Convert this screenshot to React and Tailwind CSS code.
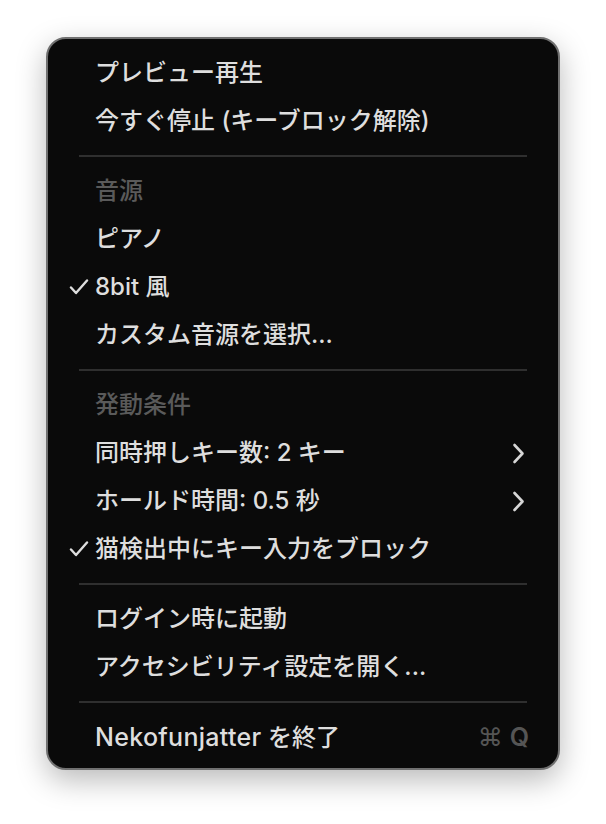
const font = {
  fontFamily: 'Inter, "Noto Sans CJK JP", sans-serif',
};

function Check() {
  return (
    <svg
      className="absolute left-[21px] top-1/2 -translate-y-1/2"
      width="20"
      height="16"
      viewBox="0 0 20 16"
      fill="none"
    >
      <path
        d="M2 8.5 L7 14 L18 1.5"
        stroke="#dedede"
        strokeWidth="2.4"
        strokeLinecap="round"
        strokeLinejoin="round"
      />
    </svg>
  );
}

function Chevron() {
  return (
    <svg width="13" height="21" viewBox="0 0 13 21" fill="none">
      <path
        d="M2.5 2 L10.5 10.5 L2.5 19"
        stroke="#d6d6d6"
        strokeWidth="2.6"
        strokeLinecap="round"
        strokeLinejoin="round"
      />
    </svg>
  );
}

function Item({ children, checked, submenu, shortcut }) {
  return (
    <div className="relative flex items-center justify-between h-[48px] pl-[47px] pr-[33px] text-[#dedede]">
      {checked && <Check />}
      <span className="text-[24px] leading-none font-medium">{children}</span>
      {submenu && <Chevron />}
      {shortcut && (
        <span className="flex items-center gap-[7px] text-[#555555] -mr-[4px]">
          <span className="text-[25px] leading-none">⌘</span>
          <span className="text-[25px] leading-none font-semibold">Q</span>
        </span>
      )}
    </div>
  );
}

function Header({ children }) {
  return (
    <div className="flex items-center h-[48px] pl-[47px] text-[24px] leading-none font-medium text-[#5a5a5a]">
      {children}
    </div>
  );
}

function Separator() {
  return (
    <div className="h-[22px] flex items-center px-[31px]">
      <div className="h-[2px] w-full bg-[#2f2f2f]" />
    </div>
  );
}

export default function App() {
  return (
    <div className="min-h-screen bg-white pt-[37px] pl-[46px]" style={font}>
      <div className="w-[514px] rounded-[20px] bg-[#0a0a0a] border-2 border-[#707070] shadow-[0_10px_30px_rgba(0,0,0,0.28)] pt-[10px] pb-[7px]">
        <Item>プレビュー再生</Item>
        <Item>今すぐ停止 (キーブロック解除)</Item>
        <Separator />
        <Header>音源</Header>
        <Item>ピアノ</Item>
        <Item checked>8bit 風</Item>
        <Item>カスタム音源を選択...</Item>
        <Separator />
        <Header>発動条件</Header>
        <Item submenu>同時押しキー数: 2 キー</Item>
        <Item submenu>ホールド時間: 0.5 秒</Item>
        <Item checked>猫検出中にキー入力をブロック</Item>
        <Separator />
        <Item>ログイン時に起動</Item>
        <Item>アクセシビリティ設定を開く...</Item>
        <Separator />
        <Item shortcut>
          <span className="text-[25px] tracking-[0.3px]">Nekofunjatter</span> を終了
        </Item>
      </div>
    </div>
  );
}
